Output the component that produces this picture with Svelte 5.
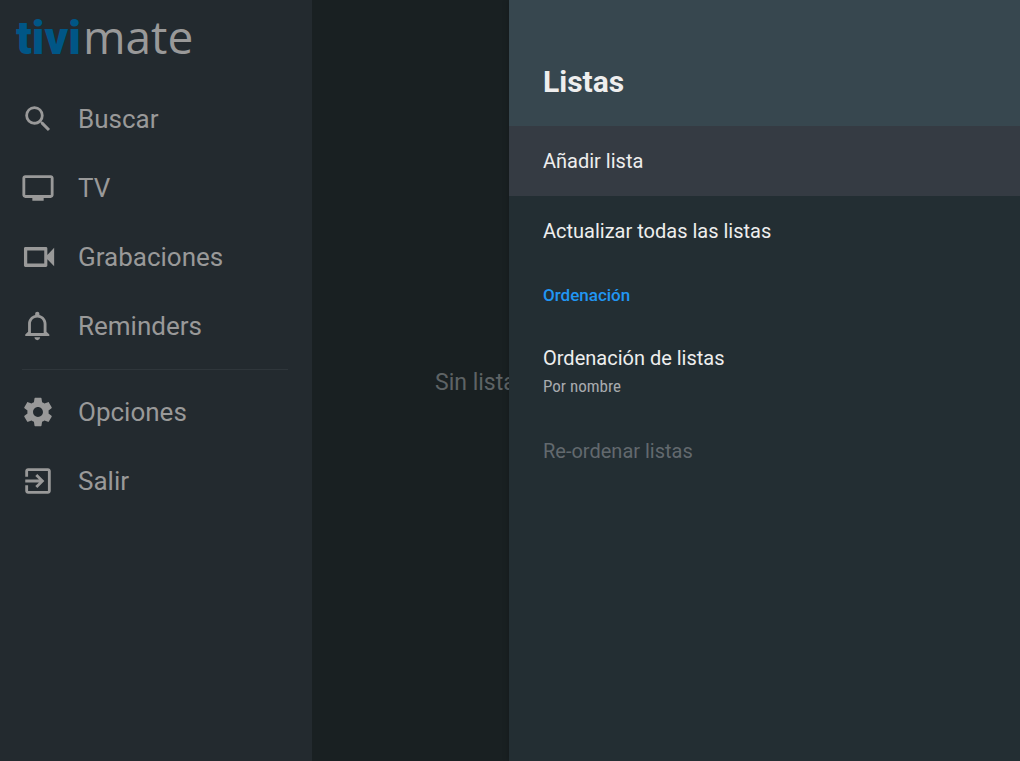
<script>
  const primary = [
    { label: 'Buscar', icon: 'search' },
    { label: 'TV', icon: 'tv' },
    { label: 'Grabaciones', icon: 'camera' },
    { label: 'Reminders', icon: 'bell' }
  ];
  const secondary = [
    { label: 'Opciones', icon: 'gear' },
    { label: 'Salir', icon: 'exit' }
  ];
  const paths = {
    search: 'M15.5 14h-.79l-.28-.27A6.47 6.47 0 0 0 16 9.5 6.5 6.5 0 1 0 9.5 16c1.61 0 3.09-.59 4.23-1.57l.27.28v.79l5 4.99L20.49 19l-4.99-5zm-6 0C7.01 14 5 11.99 5 9.5S7.01 5 9.5 5 14 7.01 14 9.5 11.99 14 9.5 14z',
    tv: 'M21 3H3c-1.1 0-2 .9-2 2v12c0 1.1.9 2 2 2h5v2h8v-2h5c1.1 0 1.99-.9 1.99-2L23 5c0-1.1-.9-2-2-2zm0 14H3V5h18v12z',
    camera: 'M18.6 10.5V6c0-.55-.45-1-1-1H3.1c-.55 0-1 .45-1 1v12c0 .55.45 1 1 1h14.5c.55 0 1-.45 1-1v-4.5l4.8 5V5.5l-4.8 5zM16.4 16.6H4.4V7.4h12v9.2z',
    bell: 'M11.5 22c1.1 0 2-.9 2-2h-4c0 1.1.9 2 2 2zm6.5-6v-5.5c0-3.07-2.13-5.64-5-6.32V3.5c0-.83-.67-1.5-1.5-1.5S10 2.67 10 3.5v.68c-2.87.68-5 3.25-5 6.32V16l-2 2v1h17v-1l-2-2zm-2 1H7v-6.5C7 8.01 9.01 6 11.5 6S16 8.01 16 10.5V17z',
    gear: 'M19.43 12.98c.04-.32.07-.64.07-.98s-.03-.66-.07-.98l2.11-1.65c.19-.15.24-.42.12-.64l-2-3.46c-.12-.22-.39-.3-.61-.22l-2.49 1c-.52-.4-1.08-.73-1.69-.98l-.38-2.65A.49.49 0 0 0 14 2h-4c-.25 0-.46.18-.49.42l-.38 2.65c-.61.25-1.17.59-1.69.98l-2.49-1c-.23-.09-.49 0-.61.22l-2 3.46c-.13.22-.07.49.12.64l2.11 1.65c-.04.32-.07.65-.07.98s.03.66.07.98l-2.11 1.65c-.19.15-.24.42-.12.64l2 3.46c.12.22.39.3.61.22l2.49-1c.52.4 1.08.73 1.69.98l.38 2.65c.03.24.24.42.49.42h4c.25 0 .46-.18.49-.42l.38-2.65c.61-.25 1.17-.59 1.69-.98l2.49 1c.23.09.49 0 .61-.22l2-3.46c.12-.22.07-.49-.12-.64l-2.11-1.65zM12 15.5c-1.93 0-3.5-1.57-3.5-3.5s1.57-3.5 3.5-3.5 3.5 1.57 3.5 3.5-1.57 3.5-3.5 3.5z',
    exit: 'M10.09 15.59 11.5 17l5-5-5-5-1.41 1.41L12.67 11H3v2h9.67l-2.58 2.59zM19 3H5c-1.11 0-2 .9-2 2v4h2V5h14v14H5v-4H3v4c0 1.1.89 2 2 2h14c1.1 0 2-.9 2-2V5c0-1.1-.9-2-2-2z'
  };
</script>

{#snippet item(entry)}
  <button class="nav-item">
    <svg viewBox="0 0 24 24" aria-hidden="true"><path d={paths[entry.icon]} /></svg>
    <span>{entry.label}</span>
  </button>
{/snippet}

<div class="app">
  <nav class="sidebar">
    <div class="logo"><b>tivi</b><span>mate</span></div>
    {#each primary as entry}{@render item(entry)}{/each}
    <hr />
    {#each secondary as entry}{@render item(entry)}{/each}
  </nav>

  <main class="content"><p>Sin listas</p></main>

  <section class="panel">
    <header><h1>Listas</h1></header>
    <button class="row focused">Añadir lista</button>
    <button class="row">Actualizar todas las listas</button>
    <h2>Ordenación</h2>
    <button class="row double">
      <span>Ordenación de listas</span>
      <small>Por nombre</small>
    </button>
    <button class="row" disabled>Re-ordenar listas</button>
  </section>
</div>

<style>
  :global(body) {
    margin: 0;
    background: #192022;
  }
  .app {
    display: flex;
    min-height: 100vh;
    font-family: Roboto, sans-serif;
    background: #192022;
  }
  button {
    border: 0;
    margin: 0;
    background: none;
    font-family: inherit;
    text-align: left;
    cursor: pointer;
  }
  .sidebar {
    flex: 0 0 312px;
    box-sizing: border-box;
    background: #232a2f;
    color: #999;
  }
  .logo {
    display: flex;
    align-items: baseline;
    gap: 2px;
    height: 69px;
    margin-bottom: 15px;
    padding-left: 16px;
    font-size: 46px;
    line-height: 72px;
  }
  .logo b {
    color: #005686;
    font-weight: 900;
  }
  .logo span {
    font-family: "Open Sans", sans-serif;
    font-weight: 400;
  }
  .nav-item {
    display: flex;
    align-items: center;
    gap: 23px;
    width: 100%;
    height: 69px;
    padding: 0 21px;
    color: inherit;
    font-size: 26px;
  }
  .nav-item svg {
    width: 34px;
    height: 34px;
    fill: currentColor;
  }
  hr {
    height: 1px;
    margin: 9px 24px 7px 22px;
    border: 0;
    background: #2f363b;
  }
  .content {
    display: flex;
    flex: 1;
    align-items: center;
    min-width: 0;
    overflow: hidden;
    padding: 4px 0 0 123px;
    color: #5e6365;
    font-size: 23px;
    white-space: nowrap;
  }
  .content p {
    margin: 0;
  }
  .panel {
    flex: 0 0 calc(50% + 1px);
    background: #232e33;
    color: #eee;
    box-shadow: 0 0 6px rgb(0 0 0 / 25%);
  }
  header {
    padding: 62px 34px 24px;
    background: #37474f;
  }
  h1 {
    margin: 0;
    font-size: 30px;
    line-height: 40px;
    font-weight: 700;
  }
  .row {
    display: block;
    width: 100%;
    min-height: 70px;
    padding: 0 34px;
    color: inherit;
    font-size: 20px;
  }
  .focused {
    background: #353b43;
  }
  h2 {
    margin: 0;
    padding: 17px 34px 25px;
    color: #2196f3;
    font-size: 17px;
    line-height: 24px;
    font-weight: 500;
  }
  .double {
    display: flex;
    flex-direction: column;
    gap: 3px;
    padding-top: 12px;
    padding-bottom: 19px;
    line-height: 28px;
  }
  .double small {
    color: #a8abae;
    font-family: "Roboto Condensed", Roboto, sans-serif;
    font-size: 17px;
    line-height: 22px;
  }
  .row:disabled {
    color: #62696e;
    cursor: default;
  }
</style>
